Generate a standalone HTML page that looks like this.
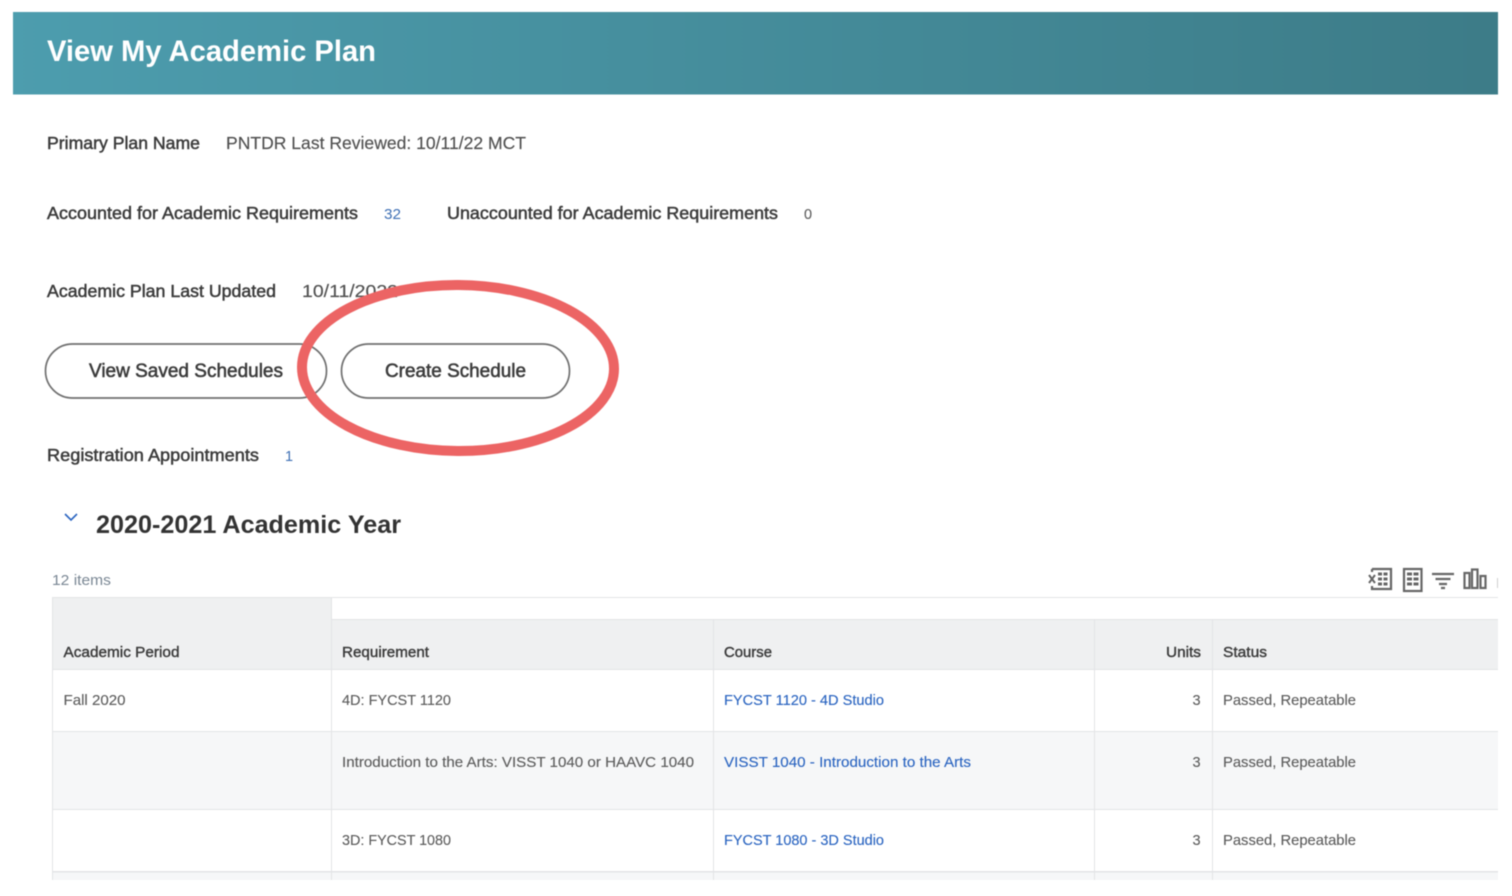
<!DOCTYPE html>
<html lang="en">
<head>
<meta charset="utf-8">
<title>View My Academic Plan</title>
<style>
html,body{margin:0;padding:0;background:#fff;width:1512px;height:896px;overflow:hidden}
svg{display:block;filter:blur(.45px)}
text{font-family:"Liberation Sans",sans-serif;white-space:pre}
.l{font-size:17.5px;fill:#3c3c3c;stroke:#3c3c3c;stroke-width:.5}
.v{font-size:17.5px;fill:#505050;stroke:#505050;stroke-width:.15}
.n{font-size:14.5px;fill:#3f70b5}
.h{font-size:14.5px;fill:#3c3c3c;stroke:#3c3c3c;stroke-width:.4}
.c{font-size:14.5px;fill:#5c5c5c;stroke:#5c5c5c;stroke-width:.12}
.a{font-size:14.5px;fill:#2a64c0;stroke:#2a64c0;stroke-width:.12}
.b{font-size:19px;fill:#3c3c3c;stroke:#3c3c3c;stroke-width:.55}
</style>
</head>
<body>
<svg width="1512" height="896" viewBox="0 0 1512 896" xmlns="http://www.w3.org/2000/svg">
<defs>
<linearGradient id="g" x1="0" y1="0" x2="1" y2="0">
<stop offset="0" stop-color="#4d9dae"/>
<stop offset="1" stop-color="#3d7c88"/>
</linearGradient>
</defs>
<rect x="13" y="12" width="1485" height="82.500" fill="url(#g)"/>
<text x="47" y="61" font-size="30" font-weight="700" fill="#fff" textLength="329" lengthAdjust="spacingAndGlyphs">View My Academic Plan</text>

<text class="l" x="47" y="149" textLength="153" lengthAdjust="spacingAndGlyphs">Primary Plan Name</text>
<text class="v" x="226" y="149" textLength="300" lengthAdjust="spacingAndGlyphs">PNTDR Last Reviewed: 10/11/22 MCT</text>

<text class="l" x="47" y="219" textLength="311" lengthAdjust="spacingAndGlyphs">Accounted for Academic Requirements</text>
<text class="n" x="384" y="219" textLength="17" lengthAdjust="spacingAndGlyphs">32</text>
<text class="l" x="447" y="219" textLength="331" lengthAdjust="spacingAndGlyphs">Unaccounted for Academic Requirements</text>
<text class="c" x="804" y="219">0</text>

<text class="l" x="47" y="297" textLength="229" lengthAdjust="spacingAndGlyphs">Academic Plan Last Updated</text>
<text class="v" x="302" y="297" textLength="96" lengthAdjust="spacingAndGlyphs">10/11/2022</text>

<rect x="45.500" y="344" width="281" height="54" rx="27" fill="none" stroke="#707070" stroke-width="1.700"/>
<text class="b" x="89" y="377" textLength="194" lengthAdjust="spacingAndGlyphs">View Saved Schedules</text>
<rect x="341.500" y="344" width="228" height="54" rx="27" fill="none" stroke="#707070" stroke-width="1.700"/>
<text class="b" x="385" y="377" textLength="141" lengthAdjust="spacingAndGlyphs">Create Schedule</text>

<ellipse cx="458" cy="368" rx="156" ry="83" fill="none" stroke="#ec6464" stroke-width="10" transform="rotate(.4 458 368)"/>

<text class="l" x="47" y="461" textLength="212" lengthAdjust="spacingAndGlyphs">Registration Appointments</text>
<text class="n" x="285" y="461">1</text>

<path d="M65 514l6 6 6-6" fill="none" stroke="#2a64c0" stroke-width="1.600"/>
<text x="96" y="533" font-size="25" font-weight="700" fill="#333" textLength="305" lengthAdjust="spacingAndGlyphs">2020-2021 Academic Year</text>

<text x="52" y="585" font-size="14.500" fill="#7a8794" textLength="59" lengthAdjust="spacingAndGlyphs">12 items</text>

<!-- toolbar icons -->
<g fill="none" stroke="#666" stroke-width="2.200">
<path d="M1372 569h19v20h-19v-3"/>
<path d="M1372 569v3"/>
<path d="M1378 574h10M1378 579h10M1378 584h10" stroke-width="3" stroke-dasharray="4 1.500"/>
<path d="M1369 575l6 8M1375 575l-6 8" stroke-width="2"/>
<rect x="1404" y="569" width="17.500" height="22"/>
<path d="M1407 574h12M1407 579h12M1407 584h12" stroke-width="3" stroke-dasharray="5 1.500"/>
<path d="M1432 574h22M1435.500 579h15M1439 584h8M1441 588h4" stroke-width="2.200"/>
<rect x="1464.500" y="573" width="5" height="15" stroke-width="2.200"/>
<rect x="1472" y="569.500" width="5.500" height="18.500" stroke-width="2.200"/>
<rect x="1480.500" y="576" width="5" height="12" stroke-width="2.200"/>
</g>
<rect x="1497" y="578" width="1" height="10" fill="#cfcfcf"/>

<!-- table backgrounds -->
<rect x="52" y="597" width="279.500" height="72" fill="#eff0f1"/>
<rect x="331" y="619" width="1167" height="50" fill="#eff0f1"/>
<rect x="52" y="731" width="1446" height="78" fill="#f6f7f8"/>
<rect x="52" y="871" width="1446" height="9" fill="#f6f7f8"/>
<!-- table lines -->
<g fill="#e3e4e6">
<rect x="52" y="597" width="1446" height="1"/>
<rect x="331" y="619" width="1167" height="1"/>
<rect x="52" y="669" width="1446" height="1"/>
<rect x="52" y="731" width="1446" height="1"/>
<rect x="52" y="809" width="1446" height="1"/>
<rect x="52" y="871" width="1446" height="1.500"/>
<rect x="52" y="597" width="1" height="283"/>
<rect x="331" y="597" width="1" height="283"/>
<rect x="713" y="619" width="1" height="261"/>
<rect x="1094" y="619" width="1" height="261"/>
<rect x="1212" y="619" width="1" height="261"/>
</g>

<!-- header -->
<text class="h" x="63.500" y="657" textLength="116" lengthAdjust="spacingAndGlyphs">Academic Period</text>
<text class="h" x="342" y="657" textLength="87" lengthAdjust="spacingAndGlyphs">Requirement</text>
<text class="h" x="724" y="657" textLength="48" lengthAdjust="spacingAndGlyphs">Course</text>
<text class="h" x="1166" y="657" textLength="35" lengthAdjust="spacingAndGlyphs">Units</text>
<text class="h" x="1223" y="657" textLength="44" lengthAdjust="spacingAndGlyphs">Status</text>

<!-- rows -->
<text class="c" x="63.500" y="705" textLength="62" lengthAdjust="spacingAndGlyphs">Fall 2020</text>
<text class="c" x="342" y="705" textLength="109" lengthAdjust="spacingAndGlyphs">4D: FYCST 1120</text>
<text class="a" x="724" y="705" textLength="160" lengthAdjust="spacingAndGlyphs">FYCST 1120 - 4D Studio</text>
<text class="c" x="1192.500" y="705">3</text>
<text class="c" x="1223" y="705" textLength="133" lengthAdjust="spacingAndGlyphs">Passed, Repeatable</text>

<text class="c" x="342" y="767" textLength="352" lengthAdjust="spacingAndGlyphs">Introduction to the Arts: VISST 1040 or HAAVC 1040</text>
<text class="a" x="724" y="767" textLength="247" lengthAdjust="spacingAndGlyphs">VISST 1040 - Introduction to the Arts</text>
<text class="c" x="1192.500" y="767">3</text>
<text class="c" x="1223" y="767" textLength="133" lengthAdjust="spacingAndGlyphs">Passed, Repeatable</text>

<text class="c" x="342" y="845" textLength="109" lengthAdjust="spacingAndGlyphs">3D: FYCST 1080</text>
<text class="a" x="724" y="845" textLength="160" lengthAdjust="spacingAndGlyphs">FYCST 1080 - 3D Studio</text>
<text class="c" x="1192.500" y="845">3</text>
<text class="c" x="1223" y="845" textLength="133" lengthAdjust="spacingAndGlyphs">Passed, Repeatable</text>
</svg>
</body>
</html>
